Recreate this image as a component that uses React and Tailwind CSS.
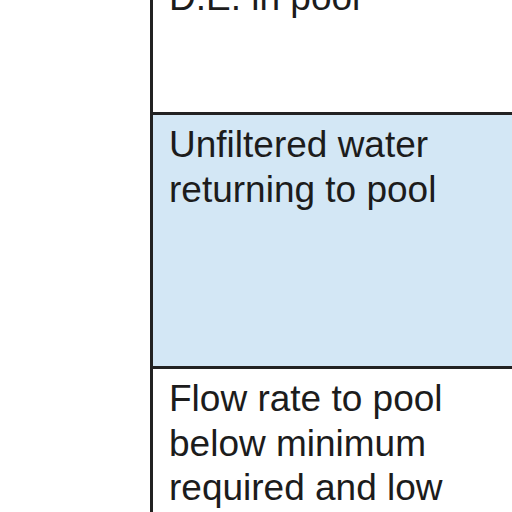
const rows = [
  { text: 'D.E. in pool', h: 'h-[147px]', bg: 'bg-white' },
  { text: 'Unfiltered water returning to pool', h: 'h-[254px]', bg: 'bg-[#d3e7f5]' },
  { text: 'Flow rate to pool below minimum required and low', h: 'h-[200px]', bg: 'bg-white' },
]

export default function App() {
  return (
    <div className="w-[512px] h-[512px] overflow-hidden bg-white flex font-['Liberation_Sans',Arial,sans-serif] text-[#1c1c1c]">
      <div className="w-[150px] shrink-0" />
      <div className="flex-1 -mt-[32px] border-l-[3px] border-[#222] flex flex-col">
        {rows.map((r, i) => (
          <div
            key={i}
            className={`${r.h} ${r.bg} shrink-0 pl-[16px] pr-[10px] pt-[8px] text-[37px] leading-[44.5px] ${i < rows.length - 1 ? 'border-b-[3px] border-[#222]' : ''}`}
          >
            <p className="w-[300px]">{r.text}</p>
          </div>
        ))}
      </div>
    </div>
  )
}
